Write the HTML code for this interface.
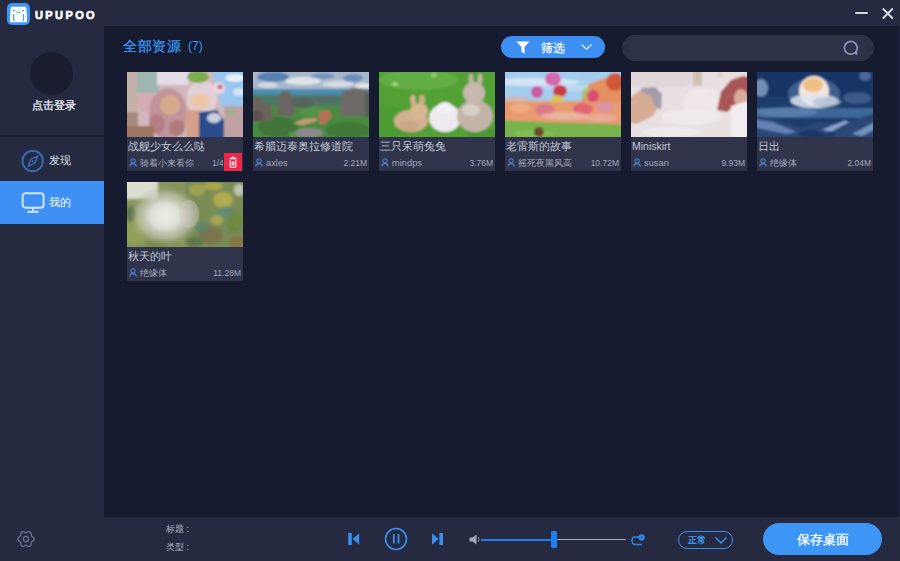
<!DOCTYPE html>
<html><head><meta charset="utf-8">
<style>
*{margin:0;padding:0;box-sizing:border-box}
html,body{width:900px;height:561px;overflow:hidden;background:#252a40;font-family:"Liberation Sans",sans-serif}
.abs{position:absolute}
#main{position:absolute;left:104px;top:26px;width:794px;height:491px;background:#171b2f;border-bottom:2px solid #161a2a}
#rstrip{position:absolute;left:898px;top:26px;width:2px;height:491px;background:#1c2139}
.card{position:absolute;width:116px;height:99px;background:#2f344a}
.card .img{position:absolute;left:0;top:0;width:116px;height:65px;overflow:hidden}
.card .t{position:absolute;left:1px;top:67px;font-size:10.5px;color:#c2c7d8;white-space:nowrap;line-height:14px}
.card .u{position:absolute;left:13px;top:85px;font-size:9.3px;color:#a2a8bc;white-space:nowrap;line-height:12px}
.card .s{position:absolute;right:2px;top:85px;font-size:8.5px;color:#a2a8bc;white-space:nowrap;line-height:12px}
.card .ui{position:absolute;left:2px;top:86px}
</style></head><body>
<!-- title bar -->
<svg class="abs" style="left:7px;top:3px" width="23" height="22" viewBox="0 0 23 22">
  <rect x="0" y="0" width="23" height="22" rx="5" fill="#3b96f7"/>
  <path d="M3.6 5.2 Q4.2 3 6.2 3.8 L16.8 3.8 Q18.8 3 19.4 5.2 L19.6 9 Q20.2 14 20 19.2 L3 19.2 Q2.8 14 3.4 9 Z" fill="#fff"/>
  <path d="M6 7.6 H8.2 M14.8 7.6 H17" stroke="#3b96f7" stroke-width="1.1"/>
  <path d="M9.2 8.6 Q10.2 10.4 11.5 9.2 Q12.8 10.4 13.8 8.6" stroke="#3b96f7" stroke-width="1" fill="none"/>
  <path d="M7 11 Q5.4 13.5 7.2 18 M16 11 Q17.6 13.5 15.8 18" stroke="#3b96f7" stroke-width="1.1" fill="none"/>
</svg>
<div class="abs" style="left:35px;top:8.5px;font-size:11px;line-height:12px;font-weight:bold;color:#fff;letter-spacing:2.4px;-webkit-text-stroke:0.6px #fff">UPUPOO</div>
<div class="abs" style="left:855px;top:12px;width:13px;height:2px;border-radius:1px;background:#d4d6de"></div>
<svg class="abs" style="left:881px;top:7px" width="13" height="13" viewBox="0 0 13 13"><path d="M1.8 1.5 L11.8 11.5 M11.8 1.5 L1.8 11.5" stroke="#d8dae2" stroke-width="1.9"/></svg>

<!-- sidebar -->
<div class="abs" style="left:30px;top:52px;width:43px;height:43px;border-radius:50%;background:#191d2f"></div>
<div class="abs" style="left:2px;top:99px;width:104px;text-align:center;font-size:10.5px;line-height:13px;color:#eef0f4;-webkit-text-stroke:0.3px #eef0f4">点击登录</div>
<div class="abs" style="left:0;top:135px;width:104px;height:2px;background:#1c2133"></div>
<svg class="abs" style="left:20px;top:149px" width="25" height="25" viewBox="0 0 25 25">
  <circle cx="12.7" cy="12" r="10.2" stroke="#3a6ab4" stroke-width="1.9" fill="none"/>
  <path d="M18 6.8 L15 13.8 L8.2 17.4 L10.8 10.4 Z" stroke="#3a6ab4" stroke-width="1.5" fill="none" stroke-linejoin="round"/>
  <circle cx="12.7" cy="12" r="1.1" fill="#3a6ab4"/>
</svg>
<div class="abs" style="left:49px;top:154px;font-size:11px;line-height:13px;color:#dfe2ea">发现</div>
<div class="abs" style="left:0;top:181px;width:104px;height:43px;background:#3e90f5"></div>
<svg class="abs" style="left:20px;top:191px" width="26" height="24" viewBox="0 0 26 24">
  <rect x="2.6" y="2.2" width="21" height="14.6" rx="3" stroke="#d6e6ff" stroke-width="1.9" fill="none"/>
  <path d="M13 17 V20.2" stroke="#d6e6ff" stroke-width="1.6"/>
  <path d="M7.5 20.8 H18.5" stroke="#d6e6ff" stroke-width="2"/>
</svg>
<div class="abs" style="left:49px;top:196px;font-size:11px;line-height:13px;color:#fff">我的</div>
<svg class="abs" style="left:16px;top:529px" width="20" height="20" viewBox="0 0 20 20"><path d="M18.20 10.00 L18.05 10.70 L17.63 11.35 L17.05 11.89 L16.44 12.34 L15.91 12.76 L15.54 13.20 L15.34 13.74 L15.25 14.40 L15.16 15.16 L14.98 15.94 L14.63 16.62 L14.10 17.10 L13.41 17.32 L12.65 17.28 L11.89 17.05 L11.19 16.75 L10.57 16.50 L10.00 16.40 L9.43 16.50 L8.81 16.75 L8.11 17.05 L7.35 17.28 L6.59 17.32 L5.90 17.10 L5.37 16.62 L5.02 15.94 L4.84 15.16 L4.75 14.40 L4.66 13.74 L4.46 13.20 L4.09 12.76 L3.56 12.34 L2.95 11.89 L2.37 11.35 L1.95 10.70 L1.80 10.00 L1.95 9.30 L2.37 8.65 L2.95 8.11 L3.56 7.66 L4.09 7.24 L4.46 6.80 L4.66 6.26 L4.75 5.60 L4.84 4.84 L5.02 4.06 L5.37 3.38 L5.90 2.90 L6.59 2.68 L7.35 2.72 L8.11 2.95 L8.81 3.25 L9.43 3.50 L10.00 3.60 L10.57 3.50 L11.19 3.25 L11.89 2.95 L12.65 2.72 L13.41 2.68 L14.10 2.90 L14.63 3.38 L14.98 4.06 L15.16 4.84 L15.25 5.60 L15.34 6.26 L15.54 6.80 L15.91 7.24 L16.44 7.66 L17.05 8.11 L17.63 8.65 L18.05 9.30 L18.20 10.00Z" stroke="#6a7190" stroke-width="1.3" fill="none"/><circle cx="10" cy="10" r="2.6" stroke="#6a7190" stroke-width="1.3" fill="none"/></svg>

<!-- main -->
<div id="main"></div><div id="rstrip"></div>
<div class="abs" style="left:123px;top:37px;font-size:14px;line-height:18px;color:#3b9bf9;letter-spacing:0.5px;-webkit-text-stroke:0.25px #3b9bf9">全部资源</div><div class="abs" style="left:188px;top:39px;font-size:12px;line-height:14px;color:#3b9bf9">(7)</div>
<div class="abs" style="left:501px;top:36px;width:104px;height:22px;border-radius:11px;background:#3d8ff3"></div>
<svg class="abs" style="left:516px;top:41px" width="14" height="13" viewBox="0 0 14 13"><path d="M0.5 0.5 H13.5 L8.6 6 V12.5 L5.4 10.8 V6 Z" fill="#fff"/></svg>
<div class="abs" style="left:541px;top:41px;font-size:12px;line-height:14px;color:#fff;-webkit-text-stroke:0.2px #fff">筛选</div>
<svg class="abs" style="left:580px;top:43px" width="13" height="8" viewBox="0 0 13 8"><path d="M1.5 1.5 L6.5 6.2 L11.5 1.5" stroke="#e8f2ff" stroke-width="1.2" fill="none"/></svg>
<div class="abs" style="left:622px;top:35px;width:252px;height:26px;border-radius:13px;background:#2d3247;border:1px solid #30354b"></div>

<svg class="abs" style="left:842px;top:39px" width="20" height="20" viewBox="0 0 20 20"><circle cx="8.8" cy="8.8" r="6.4" stroke="#8a92b8" stroke-width="1.8" fill="none"/><path d="M13.4 13.4 L15.2 15.2" stroke="#8a92b8" stroke-width="2.2"/></svg>

<!-- cards -->
<div class="card" style="left:127px;top:72px"><div class="img"><svg width="116" height="65" viewBox="0 0 116 65"><defs><filter id="f0" x="-10%" y="-10%" width="120%" height="120%"><feGaussianBlur stdDeviation="1.2"/></filter></defs><rect width="116" height="65" fill="#d0b8bc"/><g filter="url(#f0)"><rect x="-5" y="-5" width="130" height="75" fill="#d0b8bc" opacity="1"/><rect x="-5" y="-5" width="16" height="80" fill="#c4b2a8" opacity="1"/><rect x="-5" y="40" width="16" height="30" fill="#a88a7c" opacity="1"/><rect x="10" y="-5" width="22" height="26" fill="#94b6ae" opacity="0.85"/><ellipse cx="20" cy="30" rx="10" ry="10" fill="#d8a8b0" opacity="0.8"/><rect x="30" y="-5" width="32" height="18" fill="#e4dce6" opacity="1"/><path d="M84 -5 H121 V36 H96 L90 20 Z" fill="#98c6ee" opacity="1"/><ellipse cx="108" cy="6" rx="10" ry="4" fill="#eef4fa" opacity="0.9"/><ellipse cx="112" cy="20" rx="6" ry="4" fill="#e0ecf8" opacity="0.8"/><ellipse cx="41" cy="42" rx="19" ry="26" fill="#c0949a" opacity="1"/><ellipse cx="43" cy="33" rx="10" ry="10" fill="#d8aa8c" opacity="1"/><ellipse cx="30" cy="52" rx="8" ry="10" fill="#b07880" opacity="0.8"/><ellipse cx="50" cy="56" rx="8" ry="8" fill="#a87070" opacity="0.7"/><ellipse cx="75" cy="26" rx="15" ry="18" fill="#e2d0d8" opacity="1"/><ellipse cx="73" cy="29" rx="10" ry="8" fill="#ecc6a8" opacity="1"/><ellipse cx="71" cy="5" rx="11" ry="6" fill="#7cac4c" opacity="1"/><ellipse cx="92" cy="16" rx="6" ry="6" fill="#ecd8e0" opacity="1"/><ellipse cx="93" cy="15" rx="2.5" ry="2.5" fill="#c04860" opacity="0.8"/><rect x="59" y="38" width="14" height="30" fill="#d4a08c" opacity="1"/><path d="M72 40 L90 38 L98 50 L97 70 L72 70 Z" fill="#2c4c8c" opacity="1"/><ellipse cx="87" cy="46" rx="7" ry="5" fill="#e8e8f0" opacity="0.85"/><rect x="97" y="34" width="25" height="35" fill="#c0a0a2" opacity="1"/><ellipse cx="104" cy="40" rx="4" ry="4" fill="#90b888" opacity="0.7"/><rect x="-5" y="54" width="32" height="16" fill="#9c7464" opacity="1"/></g></svg></div><div class="t">战舰少女么么哒</div><svg class="ui" width="8" height="9" viewBox="0 0 8 9"><circle cx="4" cy="2.8" r="2.1" stroke="#4a7cc8" stroke-width="1.1" fill="none"/><path d="M0.7 8.6 Q1 5.6 4 5.6 Q7 5.6 7.3 8.6" stroke="#4a7cc8" stroke-width="1.1" fill="none"/></svg><div class="u">骑着小来看你</div><div class="abs" style="left:85px;top:85px;width:11px;overflow:hidden;font-size:8.5px;line-height:12px;color:#a2a8bc;white-space:nowrap">1/45M</div><div class="abs" style="left:97px;top:81px;width:18px;height:18px;background:#f0254a"></div><svg class="abs" style="left:101px;top:84px" width="10" height="12" viewBox="0 0 10 12"><path d="M1 2.8 H9 M3.5 2.8 Q3.5 1 5 1 Q6.5 1 6.5 2.8 M2.2 4.2 V10.6 Q2.2 11.2 2.8 11.2 H7.2 Q7.8 11.2 7.8 10.6 V4.2 M4.2 5.5 V9.5 M5.8 5.5 V9.5" stroke="#fff" stroke-width="1.1" fill="none"/></svg></div>
<div class="card" style="left:253px;top:72px"><div class="img"><svg width="116" height="65" viewBox="0 0 116 65"><defs><filter id="f1" x="-10%" y="-10%" width="120%" height="120%"><feGaussianBlur stdDeviation="1.2"/></filter></defs><rect width="116" height="65" fill="#3a7a30"/><g filter="url(#f1)"><rect x="-5" y="-5" width="130" height="24" fill="#a8b8cc" opacity="1"/><ellipse cx="20" cy="5" rx="16" ry="5" fill="#4a7cb0" opacity="0.9"/><ellipse cx="70" cy="4" rx="12" ry="3" fill="#5a88b8" opacity="0.7"/><ellipse cx="100" cy="6" rx="10" ry="4" fill="#5a86b6" opacity="0.8"/><ellipse cx="50" cy="9" rx="18" ry="4" fill="#dfe2e8" opacity="1"/><ellipse cx="85" cy="12" rx="16" ry="3" fill="#d8dce4" opacity="1"/><ellipse cx="15" cy="13" rx="10" ry="3" fill="#d4d8e0" opacity="1"/><ellipse cx="110" cy="14" rx="8" ry="3" fill="#e0e2e8" opacity="1"/><rect x="-5" y="17" width="130" height="9" fill="#4a8cac" opacity="1"/><rect x="-5" y="23" width="130" height="14" fill="#4e7866" opacity="1"/><rect x="-5" y="34" width="130" height="36" fill="#4a8a40" opacity="1"/><ellipse cx="25" cy="55" rx="20" ry="10" fill="#3a6c34" opacity="0.7"/><ellipse cx="95" cy="58" rx="22" ry="8" fill="#3c7434" opacity="0.7"/><ellipse cx="60" cy="40" rx="14" ry="5" fill="#5a9448" opacity="0.8"/><ellipse cx="45" cy="62" rx="10" ry="4" fill="#6a9a50" opacity="0.6"/><path d="M24 44 L25 24 L30 19 L37 20 L41 30 L42 44 Z" fill="#6a6664" opacity="1"/><path d="M86 44 L89 20 L100 16 L113 17 L118 24 L118 44 Z" fill="#6e6a68" opacity="1"/><rect x="112" y="20" width="8" height="25" fill="#4a5a4a" opacity="0.7"/><path d="M-2 50 L0 28 L4 25 L9 27 L12 34 L17 30 L20 48 Z" fill="#6e625e" opacity="1"/><ellipse cx="4" cy="44" rx="6" ry="6" fill="#5a4e4c" opacity="0.8"/><ellipse cx="50" cy="31" rx="12" ry="5" fill="#55605a" opacity="0.8"/><ellipse cx="74" cy="27" rx="12" ry="4" fill="#586a62" opacity="0.8"/><path d="M40 52 L50 47 L63 46 L64 49 L50 53 Z" fill="#c49c74" opacity="1"/><path d="M66 40 L76 38 L79 44 L72 52 L66 52 Z" fill="#b8705a" opacity="1"/><ellipse cx="56" cy="61" rx="14" ry="5" fill="#8c8a88" opacity="1"/></g></svg></div><div class="t">希腊迈泰奥拉修道院</div><svg class="ui" width="8" height="9" viewBox="0 0 8 9"><circle cx="4" cy="2.8" r="2.1" stroke="#4a7cc8" stroke-width="1.1" fill="none"/><path d="M0.7 8.6 Q1 5.6 4 5.6 Q7 5.6 7.3 8.6" stroke="#4a7cc8" stroke-width="1.1" fill="none"/></svg><div class="u">axles</div><div class="s">2.21M</div></div>
<div class="card" style="left:379px;top:72px"><div class="img"><svg width="116" height="65" viewBox="0 0 116 65"><defs><filter id="f2" x="-10%" y="-10%" width="120%" height="120%"><feGaussianBlur stdDeviation="0.9"/></filter></defs><rect width="116" height="65" fill="#52a036"/><g filter="url(#f2)"><rect x="-5" y="-5" width="130" height="75" fill="#52a036" opacity="1"/><ellipse cx="40" cy="8" rx="40" ry="10" fill="#68b048" opacity="0.8"/><ellipse cx="16" cy="12" rx="3" ry="2" fill="#c0e0a0" opacity="0.7"/><ellipse cx="55" cy="3" rx="3" ry="2" fill="#c0e0a0" opacity="0.6"/><ellipse cx="10" cy="50" rx="18" ry="16" fill="#4a9a30" opacity="0.7"/><ellipse cx="108" cy="62" rx="20" ry="6" fill="#4a9430" opacity="0.7"/><ellipse cx="32" cy="49" rx="17" ry="11" fill="#d4b090" opacity="1"/><ellipse cx="40" cy="39" rx="9" ry="8" fill="#d8b694" opacity="1"/><ellipse cx="34" cy="28" rx="2.8" ry="5.5" fill="#d4b090" opacity="1"/><ellipse cx="43" cy="28" rx="2.8" ry="5.5" fill="#d4b090" opacity="1"/><ellipse cx="30" cy="54" rx="10" ry="5" fill="#c4a080" opacity="0.6"/><ellipse cx="66" cy="46" rx="16" ry="14" fill="#eeeaf0" opacity="1"/><ellipse cx="66" cy="36" rx="8" ry="6" fill="#f4f2f6" opacity="1"/><ellipse cx="96" cy="44" rx="18" ry="16" fill="#c4b4a8" opacity="1"/><ellipse cx="95" cy="21" rx="11" ry="11" fill="#c8b8ae" opacity="1"/><ellipse cx="92" cy="7" rx="2.5" ry="5.5" fill="#c4b4a8" opacity="1"/><ellipse cx="101" cy="7" rx="2.5" ry="5.5" fill="#c4b4a8" opacity="1"/><ellipse cx="92" cy="38" rx="9" ry="6" fill="#dcd4d0" opacity="0.8"/></g></svg></div><div class="t">三只呆萌兔兔</div><svg class="ui" width="8" height="9" viewBox="0 0 8 9"><circle cx="4" cy="2.8" r="2.1" stroke="#4a7cc8" stroke-width="1.1" fill="none"/><path d="M0.7 8.6 Q1 5.6 4 5.6 Q7 5.6 7.3 8.6" stroke="#4a7cc8" stroke-width="1.1" fill="none"/></svg><div class="u">mindps</div><div class="s">3.76M</div></div>
<div class="card" style="left:505px;top:72px"><div class="img"><svg width="116" height="65" viewBox="0 0 116 65"><defs><filter id="f3" x="-10%" y="-10%" width="120%" height="120%"><feGaussianBlur stdDeviation="1.2"/></filter></defs><rect width="116" height="65" fill="#e49a70"/><g filter="url(#f3)"><rect x="-5" y="-5" width="130" height="34" fill="#a4cdee" opacity="1"/><ellipse cx="30" cy="10" rx="45" ry="4" fill="#d8e8f4" opacity="0.9"/><ellipse cx="70" cy="16" rx="30" ry="3" fill="#c8e0f2" opacity="0.7"/><ellipse cx="10" cy="28" rx="14" ry="4" fill="#e0b0a0" opacity="0.7"/><path d="M75 31 L84 12 L100 6 L121 6 L121 31 Z" fill="#e49060" opacity="1"/><ellipse cx="110" cy="10" rx="9" ry="9" fill="#d05838" opacity="1"/><ellipse cx="82" cy="22" rx="6" ry="6" fill="#a8c060" opacity="0.7"/><ellipse cx="48" cy="7" rx="8" ry="7" fill="#d468b0" opacity="1"/><ellipse cx="32" cy="20" rx="6" ry="6" fill="#cc5aa0" opacity="1"/><ellipse cx="55" cy="19" rx="7" ry="6" fill="#c83a4a" opacity="1"/><ellipse cx="52" cy="29" rx="7" ry="6" fill="#d8c458" opacity="1"/><ellipse cx="88" cy="24" rx="6" ry="6" fill="#dc4c74" opacity="1"/><rect x="-5" y="30" width="130" height="20" fill="#e89a70" opacity="1"/><ellipse cx="40" cy="38" rx="10" ry="6" fill="#d8708c" opacity="0.8"/><ellipse cx="78" cy="37" rx="10" ry="6" fill="#e05878" opacity="0.8"/><ellipse cx="100" cy="35" rx="8" ry="6" fill="#d890b0" opacity="0.8"/><ellipse cx="15" cy="36" rx="10" ry="5" fill="#f0b080" opacity="0.8"/><ellipse cx="60" cy="44" rx="24" ry="4" fill="#e8c0b0" opacity="0.7"/><ellipse cx="96" cy="46" rx="16" ry="4" fill="#e8b8b0" opacity="0.6"/><path d="M-5 48 L40 50 L121 53 L121 70 L-5 70 Z" fill="#78b44c" opacity="1"/><ellipse cx="30" cy="62" rx="20" ry="4" fill="#8ac058" opacity="0.7"/><ellipse cx="34" cy="60" rx="5" ry="5" fill="#6a4a2a" opacity="1"/></g></svg></div><div class="t">老雷斯的故事</div><svg class="ui" width="8" height="9" viewBox="0 0 8 9"><circle cx="4" cy="2.8" r="2.1" stroke="#4a7cc8" stroke-width="1.1" fill="none"/><path d="M0.7 8.6 Q1 5.6 4 5.6 Q7 5.6 7.3 8.6" stroke="#4a7cc8" stroke-width="1.1" fill="none"/></svg><div class="u">摇死夜黑风高</div><div class="s">10.72M</div></div>
<div class="card" style="left:631px;top:72px"><div class="img"><svg width="116" height="65" viewBox="0 0 116 65"><defs><filter id="f4" x="-10%" y="-10%" width="120%" height="120%"><feGaussianBlur stdDeviation="1.2"/></filter></defs><rect width="116" height="65" fill="#e8e0e0"/><g filter="url(#f4)"><rect x="-5" y="-5" width="130" height="75" fill="#e8e0e0" opacity="1"/><ellipse cx="30" cy="6" rx="40" ry="10" fill="#ddd6d6" opacity="0.8"/><rect x="62" y="-5" width="9" height="19" fill="#cdbcae" opacity="0.85"/><rect x="86" y="-5" width="6" height="10" fill="#d8ccc4" opacity="0.6"/><path d="M-5 50 L-5 28 L10 18 L26 18 L30 30 L22 44 L6 52 Z" fill="#d6ac94" opacity="1"/><path d="M10 16 L24 15 L31 22 L30 38 L24 34 L20 24 L10 20 Z" fill="#a29cab" opacity="1"/><ellipse cx="72" cy="30" rx="20" ry="14" fill="#f0e8e8" opacity="1"/><ellipse cx="60" cy="45" rx="30" ry="8" fill="#f2ecec" opacity="0.8"/><path d="M86 38 L90 20 L100 8 L112 4 L121 6 L121 22 L108 30 L96 40 Z" fill="#a85454" opacity="1"/><ellipse cx="110" cy="26" rx="7" ry="9" fill="#d8ac9a" opacity="1"/><path d="M100 34 L121 28 L121 70 L100 70 Z" fill="#f0ecf0" opacity="1"/><ellipse cx="40" cy="60" rx="30" ry="5" fill="#f0ecee" opacity="0.8"/></g></svg></div><div class="t">Miniskirt</div><svg class="ui" width="8" height="9" viewBox="0 0 8 9"><circle cx="4" cy="2.8" r="2.1" stroke="#4a7cc8" stroke-width="1.1" fill="none"/><path d="M0.7 8.6 Q1 5.6 4 5.6 Q7 5.6 7.3 8.6" stroke="#4a7cc8" stroke-width="1.1" fill="none"/></svg><div class="u">susan</div><div class="s">9.93M</div></div>
<div class="card" style="left:757px;top:72px"><div class="img"><svg width="116" height="65" viewBox="0 0 116 65"><defs><filter id="f5" x="-10%" y="-10%" width="120%" height="120%"><feGaussianBlur stdDeviation="1.0"/></filter></defs><rect width="116" height="65" fill="#1c3c6c"/><g filter="url(#f5)"><rect x="-5" y="-5" width="130" height="30" fill="#163466" opacity="1"/><ellipse cx="4" cy="16" rx="7" ry="9" fill="#8aa6cc" opacity="0.8"/><ellipse cx="108" cy="4" rx="6" ry="5" fill="#6a8ab8" opacity="0.6"/><ellipse cx="100" cy="26" rx="14" ry="6" fill="#4a6a98" opacity="0.7"/><ellipse cx="57" cy="22" rx="26" ry="16" fill="#5a7eaa" opacity="0.6"/><ellipse cx="57" cy="19" rx="15" ry="15" fill="#f4e4dc" opacity="1"/><ellipse cx="56" cy="13" rx="10" ry="7" fill="#f0c080" opacity="1"/><ellipse cx="57" cy="29" rx="24" ry="7" fill="#dce4ee" opacity="0.85"/><ellipse cx="70" cy="30" rx="14" ry="5" fill="#b0c0d4" opacity="0.7"/><rect x="-5" y="36" width="130" height="10" fill="#3e6898" opacity="1"/><ellipse cx="30" cy="40" rx="30" ry="5" fill="#6a8cb8" opacity="0.6"/><path d="M-5 44 L20 48 L45 56 L60 50 L85 52 L121 40 L121 70 L-5 70 Z" fill="#2a4676" opacity="1"/><path d="M-5 47 L15 50 L40 60 L30 62 L-5 55 Z" fill="#7a9ad0" opacity="0.7"/><path d="M60 60 L88 48 L92 50 L70 62 Z" fill="#a8c0e8" opacity="0.75"/><path d="M95 62 L118 50 L121 56 L105 64 Z" fill="#90b0e0" opacity="0.7"/><ellipse cx="60" cy="62" rx="18" ry="4" fill="#1a3060" opacity="0.8"/></g></svg></div><div class="t">日出</div><svg class="ui" width="8" height="9" viewBox="0 0 8 9"><circle cx="4" cy="2.8" r="2.1" stroke="#4a7cc8" stroke-width="1.1" fill="none"/><path d="M0.7 8.6 Q1 5.6 4 5.6 Q7 5.6 7.3 8.6" stroke="#4a7cc8" stroke-width="1.1" fill="none"/></svg><div class="u">绝缘体</div><div class="s">2.04M</div></div>
<div class="card" style="left:127px;top:182px"><div class="img"><svg width="116" height="65" viewBox="0 0 116 65"><defs><radialGradient id="sun7" cx="0.5" cy="0.5" r="0.5"><stop offset="0" stop-color="#eeeeea"/><stop offset="0.4" stop-color="#e2e4dc" stop-opacity="0.95"/><stop offset="0.75" stop-color="#c4c8b8" stop-opacity="0.6"/><stop offset="1" stop-color="#a0a890" stop-opacity="0"/></radialGradient><filter id="f7" x="-10%" y="-10%" width="120%" height="120%"><feGaussianBlur stdDeviation="1.4"/></filter></defs><rect width="116" height="65" fill="#88945c"/><g filter="url(#f7)"><rect x="-5" y="-5" width="36" height="22" fill="#dcdfd0" opacity="1"/><rect x="58" y="-5" width="70" height="75" fill="#788c56" opacity="1"/><ellipse cx="70" cy="8" rx="8" ry="6" fill="#a8a850" opacity="0.8"/><ellipse cx="96" cy="18" rx="10" ry="8" fill="#bcb050" opacity="0.85"/><ellipse cx="108" cy="40" rx="8" ry="10" fill="#6a8a3a" opacity="0.8"/><ellipse cx="84" cy="54" rx="12" ry="9" fill="#7a6c48" opacity="0.7"/><ellipse cx="98" cy="30" rx="8" ry="6" fill="#5a8a7a" opacity="0.7"/><ellipse cx="75" cy="45" rx="8" ry="6" fill="#5a8070" opacity="0.6"/><ellipse cx="110" cy="60" rx="8" ry="6" fill="#8a6a40" opacity="0.7"/><ellipse cx="86" cy="4" rx="10" ry="4" fill="#c0b448" opacity="0.7"/><ellipse cx="112" cy="8" rx="5" ry="6" fill="#e0e0d8" opacity="0.7"/><ellipse cx="90" cy="38" rx="6" ry="5" fill="#b8b058" opacity="0.7"/><ellipse cx="68" cy="60" rx="8" ry="5" fill="#4a6a40" opacity="0.6"/><ellipse cx="8" cy="48" rx="12" ry="14" fill="#90a054" opacity="1"/><ellipse cx="30" cy="62" rx="12" ry="5" fill="#7a8a48" opacity="0.8"/><ellipse cx="4" cy="32" rx="5" ry="8" fill="#4a6a40" opacity="0.7"/></g><ellipse cx="38" cy="34" rx="36" ry="30" fill="url(#sun7)"/><ellipse cx="62" cy="32" rx="10" ry="14" fill="#d8c8c8" opacity="0.4"/></svg></div><div class="t">秋天的叶</div><svg class="ui" width="8" height="9" viewBox="0 0 8 9"><circle cx="4" cy="2.8" r="2.1" stroke="#4a7cc8" stroke-width="1.1" fill="none"/><path d="M0.7 8.6 Q1 5.6 4 5.6 Q7 5.6 7.3 8.6" stroke="#4a7cc8" stroke-width="1.1" fill="none"/></svg><div class="u">绝缘体</div><div class="s">11.28M</div></div>
<!-- bottom bar -->
<div class="abs" style="left:166px;top:524px;font-size:9px;line-height:11px;color:#b4b8c6">标题 :</div>
<div class="abs" style="left:166px;top:542px;font-size:9px;line-height:11px;color:#b4b8c6">类型 :</div>
<svg class="abs" style="left:346px;top:532px" width="14" height="14" viewBox="0 0 14 14"><path d="M2.2 1 H5.8 V13 H2.2 Z M13.2 1.2 V12.8 L6.6 7 Z" fill="#3b8ef0"/></svg>
<svg class="abs" style="left:384px;top:527px" width="24" height="24" viewBox="0 0 24 24"><circle cx="12" cy="12" r="10.5" stroke="#3b8ef0" stroke-width="1.6" fill="none"/><path d="M9.8 7 V16.5 M14.5 7 V16.5" stroke="#3b8ef0" stroke-width="1.8"/></svg>
<svg class="abs" style="left:430px;top:532px" width="14" height="14" viewBox="0 0 14 14"><path d="M9.4 1 H13 V13 H9.4 Z M2 1.2 V12.8 L8.6 7 Z" fill="#3b8ef0"/></svg>
<svg class="abs" style="left:468px;top:534px" width="14" height="12" viewBox="0 0 14 12"><path d="M1.5 3.5 H4.5 L8.5 0.5 V10.5 L4.5 7.5 H1.5 Z" fill="#a0a5b8"/><path d="M10.3 3.2 Q11.6 5.5 10.3 7.8" stroke="#a0a5b8" stroke-width="1" fill="none"/></svg>
<div class="abs" style="left:481px;top:539px;width:71px;height:1.5px;background:#1f7ce8"></div>
<div class="abs" style="left:556px;top:539px;width:70px;height:1px;background:#a4a8b8"></div>
<div class="abs" style="left:551px;top:531px;width:6px;height:17px;border-radius:1.5px;background:#1d80f0"></div>
<svg class="abs" style="left:629px;top:532px" width="18" height="16" viewBox="0 0 18 16"><path d="M10 5 H6 Q3 5 3 8.5 Q3 12.5 6.5 12.5 H13" stroke="#2f88f0" stroke-width="1.4" fill="none"/><circle cx="12.6" cy="5.4" r="3.1" fill="#2f88f0"/><circle cx="12.6" cy="5.4" r="0.8" fill="#1a4a90"/></svg>
<div class="abs" style="left:678px;top:531px;width:55px;height:17.5px;border-radius:9px;border:1px solid #3a8ef2"></div>
<div class="abs" style="left:688px;top:534.5px;font-size:9px;line-height:11px;color:#42a0fa;-webkit-text-stroke:0.3px #42a0fa">正常</div>
<svg class="abs" style="left:714px;top:535.5px" width="14" height="9" viewBox="0 0 14 9"><path d="M1.5 1.5 L7 7 L12.5 1.5" stroke="#2f8cf2" stroke-width="1.5" fill="none"/></svg>
<div class="abs" style="left:763px;top:523px;width:119px;height:32px;border-radius:16px;background:#3d95f6"></div>
<div class="abs" style="left:763px;top:532px;width:119px;text-align:center;font-size:13px;line-height:15px;color:#fff;-webkit-text-stroke:0.3px #fff">保存桌面</div>
